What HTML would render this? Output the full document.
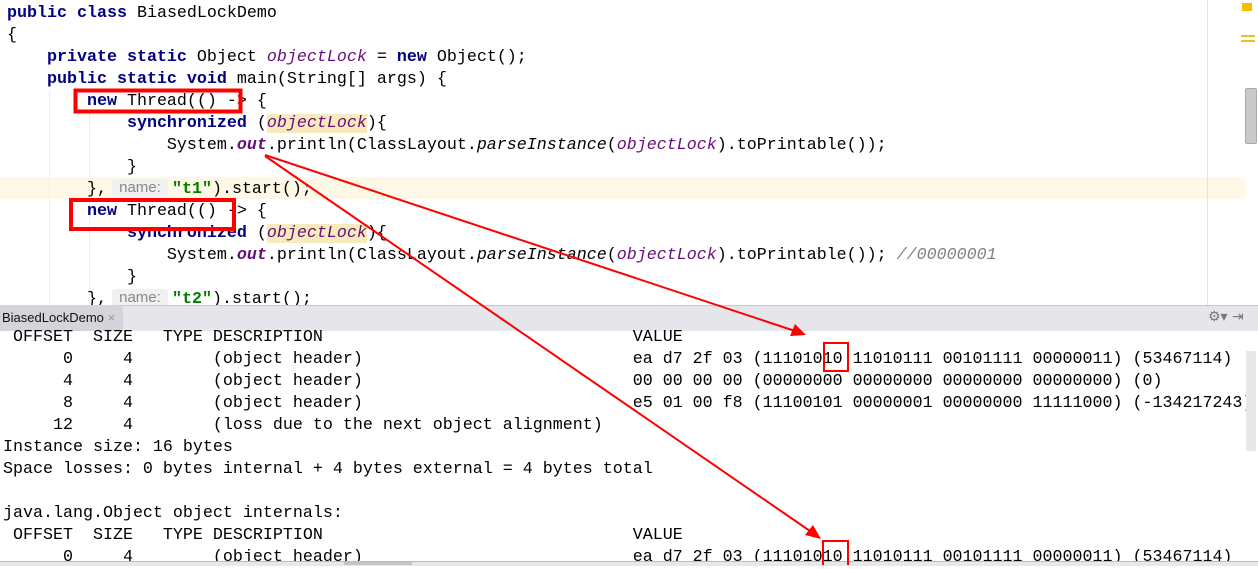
<!DOCTYPE html>
<html><head><meta charset="utf-8"><style>
body{margin:0;width:1258px;height:565px;overflow:hidden;background:#fff;position:relative;font-family:"Liberation Mono",monospace;}
.ed{position:absolute;left:0;top:0;width:1258px;height:305px;background:#fff;}
.ln{position:absolute;left:7px;height:22px;line-height:22px;font-size:16.67px;white-space:pre;color:#000;}
.k{color:#000080;font-weight:bold}
.f{color:#660e7a;font-style:italic}
.fb{color:#660e7a;font-weight:bold;font-style:italic}
.i{font-style:italic}
.s{color:#008000;font-weight:bold}
.c{color:#808080;font-style:italic}
.hl{background:#f6ebbc}
.hint{display:inline-block;width:56px;margin:0 4px 0 5px;background:#f0f0f0;color:#888;font-family:"Liberation Sans",sans-serif;font-size:15px;border-radius:3px;text-align:center;line-height:18px;vertical-align:1px}
.con{position:absolute;left:0;top:331px;width:1258px;height:234px;background:#fff;}
.cl{position:absolute;left:3px;height:22px;line-height:22px;font-size:16.67px;white-space:pre;color:#000;}
</style></head><body>
<div class="ed">
<div style="position:absolute;left:0;top:177px;width:1245px;height:22px;background:#fef9e6"></div>
<div style="position:absolute;left:49px;top:90px;width:1px;height:215px;background:#eee"></div>
<div style="position:absolute;left:89px;top:112px;width:1px;height:193px;background:#eee"></div>
<div style="position:absolute;left:1207px;top:0;width:1px;height:305px;background:#e2e2e2"></div>
<div style="position:absolute;left:1242px;top:3px;width:10px;height:8px;background:#f0c000"></div>
<div style="position:absolute;left:1241px;top:35px;width:14px;height:2px;background:#e8c020"></div>
<div style="position:absolute;left:1241px;top:40px;width:14px;height:2px;background:#e8c020"></div>
<div style="position:absolute;left:1245px;top:88px;width:10px;height:54px;background:#c9c9c9;border:1px solid #aaa;border-radius:2px"></div>
<div class="ln" style="top:3px"><span class="k">public class </span>BiasedLockDemo</div>
<div class="ln" style="top:25px">{</div>
<div class="ln" style="top:47px">    <span class="k">private static </span>Object <span class="f">objectLock</span> = <span class="k">new </span>Object();</div>
<div class="ln" style="top:69px">    <span class="k">public static void </span>main(String[] args) {</div>
<div class="ln" style="top:91px">        <span class="k">new </span>Thread(() -&gt; {</div>
<div class="ln" style="top:113px">            <span class="k">synchronized </span>(<span class="f hl">objectLock</span>){</div>
<div class="ln" style="top:135px">                System.<span class="fb">out</span>.println(ClassLayout.<span class="i">parseInstance</span>(<span class="f">objectLock</span>).toPrintable());</div>
<div class="ln" style="top:157px">            }</div>
<div class="ln" style="top:179px">        },<span class="hint">name:</span><span class="s">"t1"</span>).start();</div>
<div class="ln" style="top:201px">        <span class="k">new </span>Thread(() -&gt; {</div>
<div class="ln" style="top:223px">            <span class="k">synchronized </span>(<span class="f hl">objectLock</span>){</div>
<div class="ln" style="top:245px">                System.<span class="fb">out</span>.println(ClassLayout.<span class="i">parseInstance</span>(<span class="f">objectLock</span>).toPrintable()); <span class="c">//00000001</span></div>
<div class="ln" style="top:267px">            }</div>
<div class="ln" style="top:289px">        },<span class="hint">name:</span><span class="s">"t2"</span>).start();</div>
</div>
<div style="position:absolute;left:0;top:305px;width:1258px;height:26px;background:#e4e6eb;border-top:1px solid #c8c8c8;box-sizing:border-box"></div>
<div style="position:absolute;left:0;top:305px;width:123px;height:26px;background:#d3d5da;font-family:'Liberation Sans',sans-serif;font-size:13px;line-height:26px;padding-left:2px;box-sizing:border-box;color:#111">BiasedLockDemo <span style="color:#999">×</span></div>
<div style="position:absolute;left:1208px;top:309px;font-family:'DejaVu Sans',sans-serif;font-size:14px;color:#777">⚙▾ ⇥</div>
<div class="con">
<div class="cl" style="top:-4px"> OFFSET  SIZE   TYPE DESCRIPTION                               VALUE</div>
<div class="cl" style="top:18px">      0     4        (object header)                           ea d7 2f 03 (11101010 11010111 00101111 00000011) (53467114)</div>
<div class="cl" style="top:40px">      4     4        (object header)                           00 00 00 00 (00000000 00000000 00000000 00000000) (0)</div>
<div class="cl" style="top:62px">      8     4        (object header)                           e5 01 00 f8 (11100101 00000001 00000000 11111000) (-134217243)</div>
<div class="cl" style="top:84px">     12     4        (loss due to the next object alignment)</div>
<div class="cl" style="top:106px">Instance size: 16 bytes</div>
<div class="cl" style="top:128px">Space losses: 0 bytes internal + 4 bytes external = 4 bytes total</div>
<div class="cl" style="top:172px">java.lang.Object object internals:</div>
<div class="cl" style="top:194px"> OFFSET  SIZE   TYPE DESCRIPTION                               VALUE</div>
<div class="cl" style="top:216px">      0     4        (object header)                           ea d7 2f 03 (11101010 11010111 00101111 00000011) (53467114)</div>
<div style="position:absolute;left:1246px;top:20px;width:10px;height:100px;background:#e8e8e8"></div>
</div>
<div style="position:absolute;left:0;top:561px;width:1258px;height:4px;background:#e8e8e8;border-top:1px solid #bbb"></div>
<div style="position:absolute;left:344px;top:562px;width:68px;height:3px;background:#c4c4c4"></div>
<svg width="1258" height="565" style="position:absolute;left:0;top:0">
<g fill="none" stroke="#f00">
<rect x="75.5" y="90.5" width="165" height="21" stroke-width="4"/>
<rect x="71" y="200" width="163" height="29" stroke-width="4"/>
<rect x="824" y="343" width="24" height="28" stroke-width="2"/>
<rect x="823" y="541" width="25" height="26" stroke-width="2"/>
<line x1="265" y1="155" x2="795" y2="331" stroke-width="2"/>
<line x1="265" y1="156" x2="810" y2="531" stroke-width="2"/>
</g>
<polygon points="806,335 790,336 795,324" fill="#f00"/>
<polygon points="821,539 805,535 813,525" fill="#f00"/>
</svg>
</body></html>
